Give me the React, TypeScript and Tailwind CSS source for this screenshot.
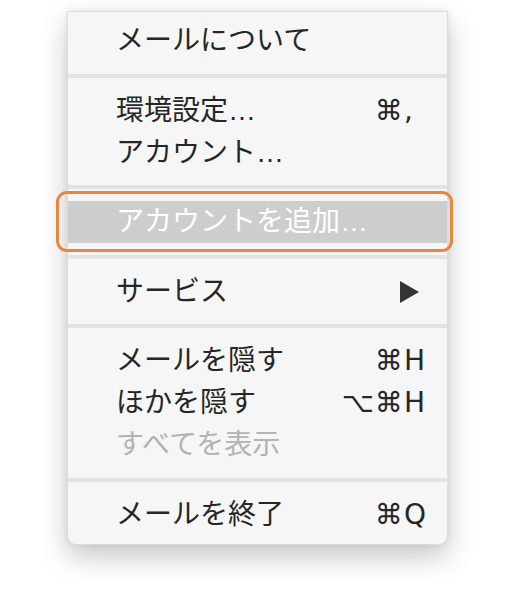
import React from "react";

type Item = {
  label: string;
  mods?: string;
  keyChar?: string;
  disabled?: boolean;
  highlighted?: boolean;
  submenu?: boolean;
};

const groups: Item[][] = [
  [{ label: "メールについて" }],
  [
    { label: "環境設定…", mods: "⌘", keyChar: "," },
    { label: "アカウント…" },
  ],
  [{ label: "アカウントを追加…", highlighted: true }],
  [{ label: "サービス", submenu: true }],
  [
    { label: "メールを隠す", mods: "⌘", keyChar: "H" },
    { label: "ほかを隠す", mods: "⌥⌘", keyChar: "H" },
    { label: "すべてを表示", disabled: true },
  ],
  [{ label: "メールを終了", mods: "⌘", keyChar: "Q" }],
];

function Row({ item }: { item: Item }) {
  const color = item.highlighted
    ? "text-white"
    : item.disabled
    ? "text-[#b3b3b3]"
    : "text-[#262626]";

  return (
    <div
      className={`relative flex h-[42px] items-center pl-[48px] pr-[21px] ${
        item.highlighted ? "bg-[#cdcdcd]" : ""
      } ${color}`}
    >
      <span className="flex-1 text-[28px] leading-none [font-family:'Liberation_Sans','Noto_Sans_CJK_JP',sans-serif]">
        {item.label}
      </span>
      {item.keyChar && (
        <span className="flex items-center text-[28px] leading-none font-medium [font-family:'DejaVu_Sans','Noto_Sans_CJK_JP',sans-serif]">
          <span className="text-right tracking-[1px]">{item.mods}</span>
          <span className="w-[22px] text-left">{item.keyChar}</span>
        </span>
      )}
      {item.submenu && (
        <svg width="19" height="22" viewBox="0 0 19 22" className="mr-[7px]">
          <path d="M0 0 L19 11 L0 22 Z" fill="#333" />
        </svg>
      )}
      {item.highlighted && (
        <div className="pointer-events-none absolute left-[-12px] right-[-6px] top-[-10px] bottom-[-9px] rounded-[11px] border-[3px] border-[#e8853f]" />
      )}
    </div>
  );
}

export default function App() {
  return (
    <div className="h-[611px] w-[507px] bg-white pt-[11px]">
      <div className="ml-[67px] w-[381px] rounded-b-[9px] border border-[#dcdcdc] bg-[#f6f6f6] py-[8px] shadow-[0_12px_28px_rgba(0,0,0,0.22),0_0_6px_rgba(0,0,0,0.08)]">
        {groups.map((g, gi) => (
          <div key={gi}>
            {gi > 0 && (
              <div className="flex h-[27.5px] items-center">
                <div className="h-[4px] w-full bg-[#e3e3e3]" />
              </div>
            )}
            {g.map((item, ii) => (
              <Row key={ii} item={item} />
            ))}
          </div>
        ))}
      </div>
    </div>
  );
}
